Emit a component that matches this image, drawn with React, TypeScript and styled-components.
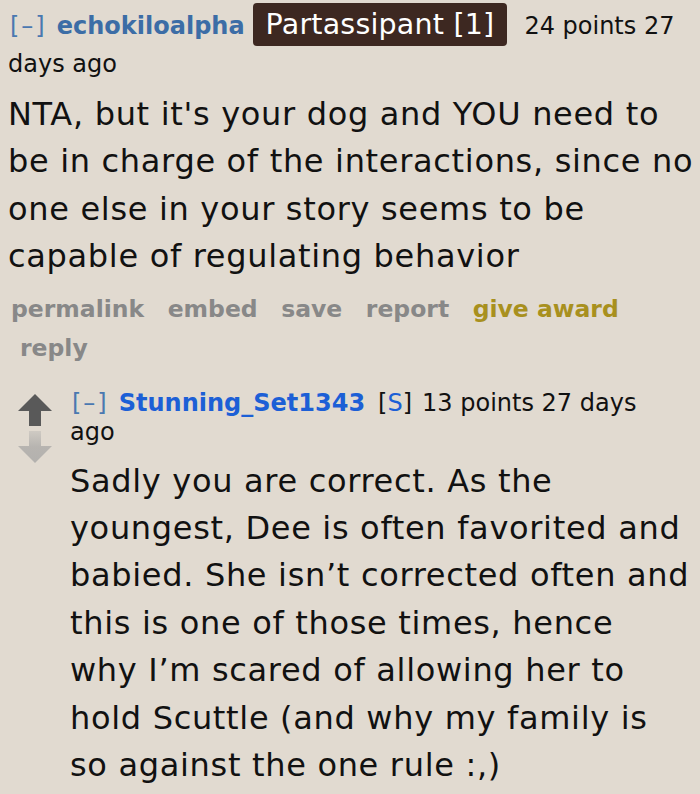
import React from "react";
import styled, { createGlobalStyle } from "styled-components";

const GlobalStyle = createGlobalStyle`
  html, body {
    margin: 0;
    padding: 0;
    background: #e1dad0;
  }
  body {
    font-family: "DejaVu Sans", Verdana, sans-serif;
    color: #111;
  }
`;

const Page = styled.div`
  width: 700px;
  height: 794px;
  overflow: hidden;
  padding: 7px 8px 0 8px;
  box-sizing: border-box;
`;

const Tagline = styled.div<{ $lh: number }>`
  font-size: 24px;
  line-height: ${(p) => p.$lh}px;
`;

const Toggle = styled.span`
  color: #4a78b0;
  letter-spacing: 2px;
  margin-left: 2px;
  margin-right: 10px;
`;

const Author = styled.span<{ $op?: boolean }>`
  font-weight: bold;
  color: ${(p) => (p.$op ? "#1c5fd6" : "#3c6da6")};
  margin-right: ${(p) => (p.$op ? 12 : 8)}px;
`;

const Flair = styled.span`
  display: inline-block;
  background: #3d2821;
  color: #fff;
  border-radius: 4px;
  padding: 0 13px;
  line-height: 43px;
  font-size: 28.5px;
  letter-spacing: 0.2px;
  margin-right: 17px;
  vertical-align: middle;
  margin-top: -4px;
`;

const Submitter = styled.span`
  color: #111;
  margin-left: 1px;
  margin-right: 10px;
  span {
    color: #1c5fd6;
  }
`;

const Meta = styled.span`
  color: #111;
`;

const Body = styled.div<{ $top: number }>`
  font-size: 32px;
  line-height: 47.4px;
  letter-spacing: 0.68px;
  white-space: nowrap;
  margin-top: ${(p) => p.$top}px;
`;

const Buttons = styled.ul`
  list-style: none;
  margin: 9px 0 0 0;
  padding: 0 0 0 3px;
  display: flex;
  flex-wrap: wrap;
  width: 640px;
  column-gap: 23.5px;
  font-size: 23.5px;
  line-height: 39px;
  font-weight: bold;
`;

const Action = styled.li<{ $gold?: boolean }>`
  color: ${(p) => (p.$gold ? "#a8901e" : "#888888")};
  &:last-child {
    margin-left: 9px;
  }
`;

const Child = styled.div`
  display: flex;
  margin-top: 21px;
  padding-left: 10px;
`;

const Votes = styled.div`
  display: flex;
  flex-direction: column;
  gap: 5px;
  width: 52px;
  padding-top: 5px;
`;

const Entry = styled.div`
  flex: 1;
`;

const Arrow = ({ down }: { down?: boolean }) => (
  <svg width="34" height="32" viewBox="0 0 34 32">
    {down ? (
      <>
        <defs>
          <linearGradient id="fade" x1="0" y1="0" x2="0" y2="1">
            <stop offset="0" stopColor="#cfcac3" />
            <stop offset="0.5" stopColor="#b7b4b0" />
            <stop offset="1" stopColor="#b3b1ae" />
          </linearGradient>
        </defs>
        <path d="M11 0 H23 V15 H34 L17 32 L0 15 H11 Z" fill="url(#fade)" />
      </>
    ) : (
      <path d="M17 0 L34 17 H23 V32 H11 V17 H0 Z" fill="#595959" />
    )}
  </svg>
);

export default function App() {
  return (
    <>
      <GlobalStyle />
      <Page>
        <Tagline $lh={37}>
          <Toggle>[–]</Toggle>
          <Author>echokiloalpha</Author>
          <Flair>Partassipant [1]</Flair>
          <Meta>24 points 27</Meta>
          <br />
          <Meta>days ago</Meta>
        </Tagline>
        <Body $top={8}>
          NTA, but it's your dog and YOU need to
          <br />
          be in charge of the interactions, since no
          <br />
          one else in your story seems to be
          <br />
          capable of regulating behavior
        </Body>
        <Buttons>
          <Action>permalink</Action>
          <Action>embed</Action>
          <Action>save</Action>
          <Action>report</Action>
          <Action $gold>give award</Action>
          <Action>reply</Action>
        </Buttons>
        <Child>
          <Votes>
            <Arrow />
            <Arrow down />
          </Votes>
          <Entry>
            <Tagline $lh={29}>
              <Toggle>[–]</Toggle>
              <Author $op>Stunning_Set1343</Author>
              <Submitter>
                [<span>S</span>]
              </Submitter>
              <Meta>13 points 27 days</Meta>
              <br />
              <Meta>ago</Meta>
            </Tagline>
            <Body $top={11}>
              Sadly you are correct. As the
              <br />
              youngest, Dee is often favorited and
              <br />
              babied. She isn’t corrected often and
              <br />
              this is one of those times, hence
              <br />
              why I’m scared of allowing her to
              <br />
              hold Scuttle (and why my family is
              <br />
              so against the one rule :,)
            </Body>
          </Entry>
        </Child>
      </Page>
    </>
  );
}
